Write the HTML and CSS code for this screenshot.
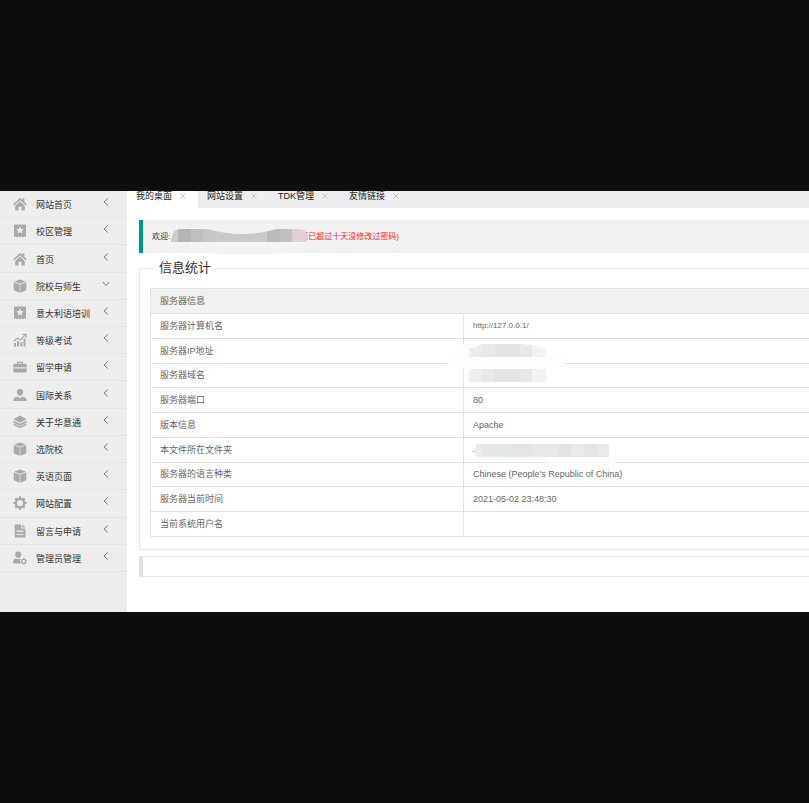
FILE: index.html
```html
<!DOCTYPE html>
<html lang="zh-CN">
<head>
<meta charset="utf-8">
<meta name="viewport" content="width=device-width, initial-scale=1">
<title>我的桌面</title>
<link rel="stylesheet" href="styles.css">
</head>
<body>
<svg class="defs" aria-hidden="true">
  <symbol id="i-home" viewBox="0 0 14 14"><path d="M.2 7.300 7 .9l2.400 2.200V1.600h2v3.300l2.400 2.400-1 1.100L7 3.200 1.200 8.400z"/><path d="M2.200 8.900 7 4.600l4.800 4.300v4.500H8.500V9.800h-3v3.600H2.200z"/></symbol>
  <symbol id="i-star" viewBox="0 0 14 14"><path fill-rule="evenodd" d="M1 .6h12v12.800l-1.500-1.200-1.500 1.200-1.500-1.200L7 13.400l-1.500-1.200L4 13.400l-1.500-1.200L1 13.400zM7 2.600l-1.100 2.300-2.600.3 1.900 1.800-.5 2.500L7 8.300l2.300 1.200-.5-2.500 1.900-1.800-2.600-.3z"/></symbol>
  <symbol id="i-cube" viewBox="0 0 14 14"><path d="M7 .5 12.800 2.600 7 4.800 1.200 2.600zM.7 3.200l6 2.300v8.200l-6-2.400zM13.300 3.200l-6 2.300v8.200l6-2.400z"/></symbol>
  <symbol id="i-chart" viewBox="0 0 14 14"><path d="M1 10h2v3.500H1zM4 8h2v5.500H4zM7.300 9h2v4.500h-2zM10.500 5.500h2v8h-2z"/><path d="M.7 8.300 4.700 5l2.600 2L12 2.200M9.500 1.300h3.700V5" fill="none" stroke="currentColor" stroke-width="1.200"/></symbol>
  <symbol id="i-case" viewBox="0 0 14 14"><path fill-rule="evenodd" d="M4 3.800V2.600Q4 1.600 5 1.600h4q1 0 1 1v1.200h2.800q1 0 1 1v2.700H9.500v-.8h-1v.8h-3v-.8h-1v.8H.2V4.800q0-1 1-1zm1.200 0h3.600v-1H5.200zM.2 8.200h4.300V9h1v-.8h3V9h1v-.8h4.300v3.400q0 .8-.8.8H1q-.8 0-.8-.8z"/></symbol>
  <symbol id="i-user" viewBox="0 0 14 14"><path d="M7 .8c2 0 3.200 1.400 3.200 3.300S8.800 8 7 8 3.800 6 3.800 4.100 5 .8 7 .8zM.5 13v-1.500q0-1.800 2-2.300L5 8.600l2 1.700 2-1.700 2.500.6q2 .5 2 2.300V13z"/></symbol>
  <symbol id="i-layers" viewBox="0 0 14 14"><path d="M7 .6 13.700 4.200 7 7.800.3 4.200z"/><path d="M.6 6.400 7 9.800l6.400-3.400M.6 9 7 12.400 13.400 9" fill="none" stroke="currentColor" stroke-width="1.700"/></symbol>
  <symbol id="i-gear" viewBox="0 0 14 14"><circle cx="7" cy="7" r="4.200" fill="none" stroke="currentColor" stroke-width="2.200"/><path d="M7 .3v2.400M7 11.300v2.400M.3 7h2.400M11.300 7h2.400M2.300 2.300 4 4M10 10l1.700 1.700M2.300 11.700 4 10M10 4l1.700-1.700" fill="none" stroke="currentColor" stroke-width="2.200"/></symbol>
  <symbol id="i-file" viewBox="0 0 14 14"><path fill-rule="evenodd" d="M2.700.5h5.500v4h4.300v8q0 1-1 1h-8.800q-1 0-1-1v-11q0-1 1-1zM3.600 6.600v1.100h7V6.600zM3.600 10v1.100h7V10z"/><path d="M9.200.5 12.500 3.600H9.200z"/></symbol>
  <symbol id="i-admin" viewBox="0 0 14 14"><path d="M5.200.5a3 3 0 0 1 3 3.100c0 1.900-1.300 3.500-3 3.500s-3-1.600-3-3.500a3 3 0 0 1 3-3.100zM.2 12.500v-1.700Q.2 8 3 7.600l2.200.6 2.400-.5q-1.500 2.500.2 4.800z"/><circle cx="10.700" cy="10.300" r="2" fill="none" stroke="currentColor" stroke-width="1.200"/><path d="M10.700 7v1.200M10.700 12.400v1.200M7.800 8.700l1.100.6M12.500 11.300l1.100.6M7.800 11.900l1.100-.6M12.500 9.300l1.100-.6" fill="none" stroke="currentColor" stroke-width="1.300"/></symbol>
  <symbol id="i-left" viewBox="0 0 8 8"><path d="M5.800.5 2 4l3.800 3.500" fill="none" stroke="currentColor"/></symbol>
  <symbol id="i-down" viewBox="0 0 8 8"><path d="M.7 2 4 5.500 7.300 2" fill="none" stroke="currentColor"/></symbol>
  <symbol id="i-close" viewBox="0 0 6 6"><path d="M.4.4l5.200 5.200M5.600.4.400 5.600" fill="none" stroke="currentColor" stroke-width=".8"/></symbol>
</svg>
<div class="app">
  <nav class="sidebar">
    <ul class="menu">
      <li><a href="#"><svg class="icon"><use href="#i-home"/></svg><span>网站首页</span><svg class="arrow"><use href="#i-left"/></svg></a></li>
      <li><a href="#"><svg class="icon"><use href="#i-star"/></svg><span>校区管理</span><svg class="arrow"><use href="#i-left"/></svg></a></li>
      <li><a href="#"><svg class="icon"><use href="#i-home"/></svg><span>首页</span><svg class="arrow"><use href="#i-left"/></svg></a></li>
      <li><a href="#"><svg class="icon"><use href="#i-cube"/></svg><span>院校与师生</span><svg class="arrow"><use href="#i-down"/></svg></a></li>
      <li><a href="#"><svg class="icon"><use href="#i-star"/></svg><span>意大利语培训</span><svg class="arrow"><use href="#i-left"/></svg></a></li>
      <li><a href="#"><svg class="icon"><use href="#i-chart"/></svg><span>等级考试</span><svg class="arrow"><use href="#i-left"/></svg></a></li>
      <li><a href="#"><svg class="icon"><use href="#i-case"/></svg><span>留学申请</span><svg class="arrow"><use href="#i-left"/></svg></a></li>
      <li><a href="#"><svg class="icon"><use href="#i-user"/></svg><span>国际关系</span><svg class="arrow"><use href="#i-left"/></svg></a></li>
      <li><a href="#"><svg class="icon"><use href="#i-layers"/></svg><span>关于华意通</span><svg class="arrow"><use href="#i-left"/></svg></a></li>
      <li><a href="#"><svg class="icon"><use href="#i-cube"/></svg><span>选院校</span><svg class="arrow"><use href="#i-left"/></svg></a></li>
      <li><a href="#"><svg class="icon"><use href="#i-cube"/></svg><span>英语页面</span><svg class="arrow"><use href="#i-left"/></svg></a></li>
      <li><a href="#"><svg class="icon"><use href="#i-gear"/></svg><span>网站配置</span><svg class="arrow"><use href="#i-left"/></svg></a></li>
      <li><a href="#"><svg class="icon"><use href="#i-file"/></svg><span>留言与申请</span><svg class="arrow"><use href="#i-left"/></svg></a></li>
      <li><a href="#"><svg class="icon"><use href="#i-admin"/></svg><span>管理员管理</span><svg class="arrow"><use href="#i-left"/></svg></a></li>
    </ul>
  </nav>
  <main class="main">
    <div class="tabs">
      <a class="tab active" href="#">我的桌面<svg class="close"><use href="#i-close"/></svg></a>
      <a class="tab" href="#">网站设置<svg class="close"><use href="#i-close"/></svg></a>
      <a class="tab" href="#">TDK管理<svg class="close"><use href="#i-close"/></svg></a>
      <a class="tab" href="#">友情链接<svg class="close"><use href="#i-close"/></svg></a>
    </div>
    <div class="content">
      <div class="notice">
        <span class="hello">欢迎:</span>
        <span class="warn">您已超过十天没修改过密码)</span>
        <svg class="mask mask-name" viewBox="0 0 150 26" aria-hidden="true">
          <defs><clipPath id="name-shape"><path d="M5 2Q8 0 12 0H38Q56 5 73 5T108 0H130Q137 0 138 6V13H2V10z"/></clipPath></defs>
          <path d="M20 13H138Q134 24 100 25H50Q38 22 20 21z" fill="#f3f3f3"/>
          <g clip-path="url(#name-shape)">
            <path fill="#cbcbcb" d="M0 0h9v13H0z"/><path fill="#b4b4b6" d="M9 0h13v13H9z"/><path fill="#bfbfbf" d="M22 0h12v13H22z"/><path fill="#c5c7c5" d="M34 0h13v13H34z"/><path fill="#cacaca" d="M47 0h51v13H47z"/><path fill="#babab8" d="M98 0h13v13H98z"/><path fill="#c0c0c0" d="M111 0h12v13h-12z"/><path fill="#e2d0d1" d="M123 0h15v13h-15z"/>
          </g>
        </svg>
      </div>
      <fieldset class="panel">
        <legend>信息统计</legend>
        <table class="info">
          <colgroup><col class="name-col"><col></colgroup>
          <thead><tr><th colspan="2">服务器信息</th></tr></thead>
          <tbody>
            <tr><td>服务器计算机名</td><td class="small">http://127.0.0.1/</td></tr>
            <tr><td>服务器IP地址</td><td><div class="hidden-value">
              <svg class="mask mask-ip" viewBox="0 0 122 44" aria-hidden="true">
                <path fill="#fdfdfd" d="M10 2H40V12H118V26H100V38H20V26H0V16H10z"/>
                <path fill="#eee" d="M22 6h6L34 2v13H22zM22 27h13v13H22z"/>
                <path fill="#e8e8e8" d="M34 2h14v13H34zM35 27h13v13H35z"/>
                <path fill="#e3e3e3" d="M48 2h25v13H48zM48 27h25v13H48z"/>
                <path fill="#e7e9e8" d="M73 2l12 1v12H73zM73 27h12v13H73z"/>
                <path fill="#f3f3f3" d="M85 3l14 4v8H85zM85 27h14v13H85z"/>
              </svg></div></td></tr>
            <tr><td>服务器域名</td><td></td></tr>
            <tr><td>服务器端口</td><td>80</td></tr>
            <tr><td>版本信息</td><td>Apache</td></tr>
            <tr><td>本文件所在文件夹</td><td><div class="hidden-value">
              <svg class="mask mask-path" viewBox="0 0 142 22" aria-hidden="true">
                <path fill="#fcfcfc" d="M20 0H60V16H142V22H80L60 18H10z"/>
                <path fill="#ebebeb" d="M4 2h6v13H4L1 9z"/><path fill="#e6e6e6" d="M9 2h13v13H9z"/><path fill="#e4e7e7" d="M22 2h13v13H22z"/><path fill="#e5e5e4" d="M35 2h25v13H35z"/><path fill="#e8e8e8" d="M60 2h25v13H60z"/><path fill="#e3e3e2" d="M85 2h13v13H85z"/><path fill="#e9e9e9" d="M98 2h13v13H98z"/><path fill="#e4e4e4" d="M111 2h13v13h-13z"/><path fill="#e9e9e9" d="M124 2h12v13h-12z"/>
                <path fill="#999" d="M0 9h1v1H0z"/>
              </svg></div></td></tr>
            <tr><td>服务器的语言种类</td><td>Chinese (People's Republic of China)</td></tr>
            <tr><td>服务器当前时间</td><td>2021-05-02 23:48:30</td></tr>
            <tr><td>当前系统用户名</td><td></td></tr>
          </tbody>
        </table>
      </fieldset>
      <div class="quote"></div>
    </div>
  </main>
</div>
</body>
</html>
```
FILE: styles.css
```css
* {
  box-sizing: border-box;
}

body {
  margin: 0;
  min-height: 100vh;
  display: flex;
  align-items: center;
  background: #0e0e0e;
  color: #333;
  font: 9px/14px "Liberation Sans", "Noto Sans CJK SC", sans-serif;
}

a {
  color: inherit;
  text-decoration: none;
}

.defs {
  position: absolute;
  width: 0;
  height: 0;
}

.app {
  flex: 1;
  min-width: 0;
  display: flex;
  background: #fff;
}

.sidebar {
  flex: 0 0 127px;
  background: #ededed;
}

.menu {
  height: 381px;
  margin: 0;
  padding: 0;
  list-style: none;
  display: grid;
  grid-auto-rows: 1fr;
}

.menu li {
  border-bottom: 1px solid #e2e2e2;
}

.menu a {
  height: 100%;
  padding: 0 17px 0 13px;
  display: flex;
  align-items: center;
  gap: 9px;
}

.menu span {
  flex: 1;
  padding-top: 2px;
  white-space: nowrap;
}

.icon {
  width: 14px;
  height: 14px;
  color: #aaa;
  fill: currentColor;
}

.arrow {
  width: 8px;
  height: 8px;
  margin-bottom: 4px;
  color: #777;
}

.main {
  flex: 1;
  min-width: 0;
}

.tabs {
  height: 17px;
  display: flex;
  align-items: flex-end;
  overflow: hidden;
  background: #eeeef0;
  color: #222;
}

.tab {
  flex: 0 0 71px;
  height: 24px;
  padding: 0 12px 0 9px;
  display: flex;
  align-items: center;
  justify-content: space-between;
  white-space: nowrap;
}

.tab.active {
  background: #fff;
}

.close {
  width: 6px;
  height: 6px;
  color: #bbb;
}

.content {
  padding: 12px 0 35px 12px;
}

.notice {
  position: relative;
  height: 33px;
  padding-left: 9px;
  display: flex;
  align-items: center;
  gap: 130px;
  border-left: 4px solid #009688;
  background: #f1f1f1;
  font-size: 8px;
  white-space: nowrap;
}

.warn {
  color: #f22;
}

.mask {
  position: absolute;
}

.mask-name {
  left: 26px;
  top: 9px;
  width: 150px;
  height: 26px;
}

.panel {
  margin: 5px 0 0;
  padding: 10px 0 12px 10px;
  border: 1px solid #e8e8e8;
  border-right: 0;
}

.panel legend {
  margin-left: 3px;
  padding: 0 6px;
  font-size: 13px;
  line-height: 20px;
}

.info {
  width: 100%;
  height: 249px;
  border-collapse: collapse;
  table-layout: fixed;
  color: #666;
}

.info th,
.info td {
  padding: 0 9px;
  border: 1px solid #e2e2e2;
  border-right: 0;
  text-align: left;
  font-weight: 400;
}

.info th {
  height: 25px;
  background: #f1f1f1;
}

.info .name-col {
  width: 313px;
}

.info .small {
  font-size: 8px;
}

.hidden-value {
  position: relative;
  height: 14px;
}

.mask-ip {
  left: -26px;
  top: -2px;
  width: 122px;
  height: 44px;
}

.mask-path {
  left: 0;
  top: -1px;
  width: 142px;
  height: 22px;
}

.quote {
  height: 21px;
  margin-top: 6px;
  border: 1px solid #e8e8e8;
  border-left: 4px solid #e2e2e2;
  border-right: 0;
}
```
